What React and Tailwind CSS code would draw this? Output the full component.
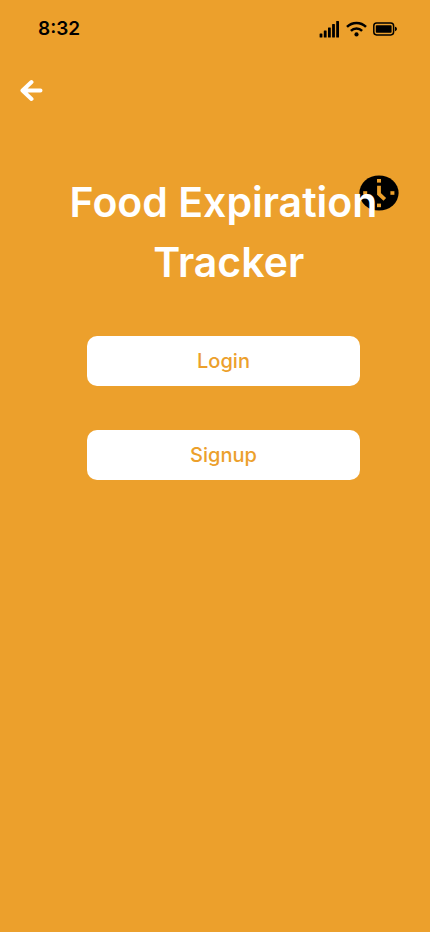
function StatusBar() {
  return (
    <header className="flex h-[58px] items-center justify-between pr-8 pl-[38px] text-black">
      <time className="text-[19px] font-semibold">8:32</time>
      <div className="flex items-center gap-[6px]">
        <svg className="h-[18px] w-[21px]" viewBox="0 0 21 18" fill="currentColor" aria-hidden="true">
          <rect x="0.6" y="13.4" width="2.8" height="4.1" rx="0.5" />
          <rect x="4.8" y="10.4" width="2.8" height="7.1" rx="0.5" />
          <rect x="9" y="7.4" width="2.8" height="10.1" rx="0.5" />
          <rect x="13.1" y="4.1" width="2.8" height="13.4" rx="0.5" />
          <rect x="17.2" y="1" width="2.8" height="16.5" rx="0.5" />
        </svg>
        <svg className="h-4 w-[21px]" viewBox="0 0 21 16" fill="none" stroke="currentColor" strokeWidth="2.5" aria-hidden="true">
          <path d="M1 5.9C6.2 0.7 14.8 0.7 20 5.9" />
          <path d="M4.9 9.8C8 6.7 13 6.7 16.1 9.8" />
          <circle cx="10.5" cy="13.4" r="2.1" fill="currentColor" stroke="none" />
        </svg>
        <svg className="h-[14px] w-[25px]" viewBox="0 0 25 14" fill="none" aria-hidden="true">
          <rect x="0.8" y="1.1" width="19.8" height="11.8" rx="2.8" stroke="currentColor" strokeWidth="1.5" />
          <rect x="2.8" y="3.2" width="15.8" height="7.6" rx="0.8" fill="currentColor" />
          <path d="M22 4.8C24.6 5.2 24.6 8.8 22 9.2Z" fill="currentColor" />
        </svg>
      </div>
    </header>
  );
}

function Clock() {
  return (
    <svg className="absolute top-[3px] right-[-21px] h-9 w-10" viewBox="0 0 40 36" fill="none" aria-hidden="true">
      <ellipse cx="20" cy="18" rx="19.6" ry="17.6" fill="#000" />
      <g fill="#eca02c">
        <rect x="18" y="4" width="4" height="3.6" />
        <rect x="18" y="28.6" width="4" height="3.6" />
        <rect x="4.2" y="16.2" width="4" height="3.6" />
        <rect x="31.4" y="16.2" width="4" height="3.6" />
      </g>
      <path d="M20 10.8V19L25.8 24.4" stroke="#eca02c" strokeWidth="3.8" />
    </svg>
  );
}

export default function App() {
  return (
    <div className="flex min-h-screen flex-col bg-[#eca02c] font-[Inter,'Open_Sans',sans-serif]">
      <StatusBar />
      <nav className="px-5 pt-5">
        <button type="button" aria-label="Back" className="block text-white">
          <svg className="h-6 w-6" viewBox="0 0 24 24" fill="none" stroke="currentColor" strokeWidth="4" strokeLinecap="round" strokeLinejoin="round" aria-hidden="true">
            <path d="M20.5 12.5H2.5M11.5 4L2.5 12.5L11.5 21" />
          </svg>
        </button>
      </nav>
      <main className="flex flex-col pt-[70px] pr-[70px] pl-[87px]">
        <div className="relative -mx-[18px] flex flex-col items-center">
          <Clock />
          <h1 className="relative text-center text-[41px] leading-[60px] font-semibold whitespace-nowrap text-white">
            Food Expiration
            <br />
            &nbsp;Tracker
          </h1>
        </div>
        <div className="mt-11 flex flex-col gap-11 text-xl text-[#eca02c]">
          <button type="button" className="h-[50px] rounded-[10px] bg-white font-medium">Login</button>
          <button type="button" className="h-[50px] rounded-[10px] bg-white font-medium">Signup</button>
        </div>
      </main>
    </div>
  );
}
